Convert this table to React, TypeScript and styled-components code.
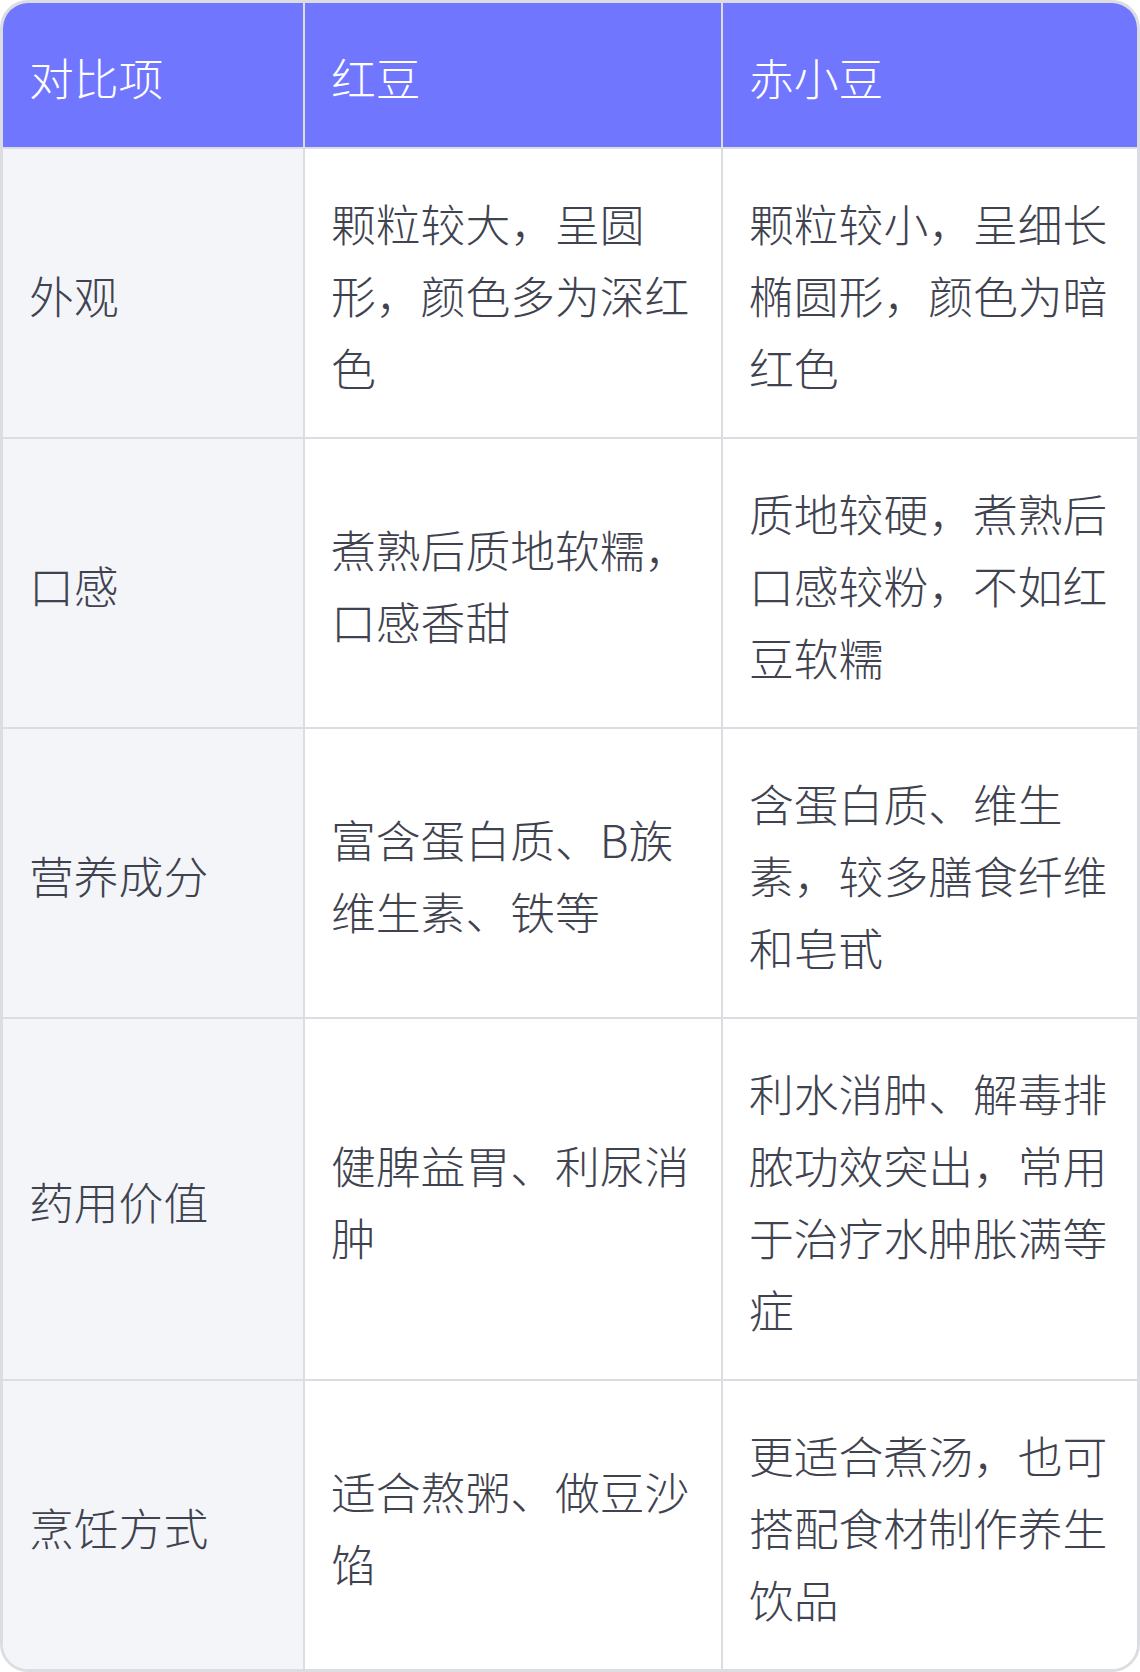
import React from 'react'
import styled, { createGlobalStyle } from 'styled-components'

const GlobalStyle = createGlobalStyle`
  html, body {
    margin: 0;
    padding: 0;
    background: #ffffff;
  }

  body {
    font-family: 'Noto Sans CJK SC', 'Noto Sans', sans-serif;
  }
`

const TableFrame = styled.div`
  width: 1140px;
  box-sizing: border-box;
  border: 3px solid #dcdde3;
  border-radius: 28px;
  overflow: hidden;
  background: #ffffff;
`

const Table = styled.table`
  width: 100%;
  border-collapse: collapse;
  table-layout: fixed;
`

const HeadCell = styled.th`
  box-sizing: border-box;
  padding: 38px 22px 33.5px 26px;
  background: #7176ff;
  color: #ffffff;
  font-size: 44.8px;
  font-weight: 300;
  line-height: 72px;
  text-align: left;
  vertical-align: middle;
  border-right: 2px solid #dcdde3;
  border-bottom: 2px solid #dcdde3;

  &:last-child {
    border-right: none;
  }
`

const Cell = styled.td<{ $label?: boolean }>`
  box-sizing: border-box;
  padding: 38px 22px 34px 26px;
  background: ${(p) => (p.$label ? '#f4f5f9' : '#ffffff')};
  color: #3f4350;
  font-size: 44.8px;
  font-weight: 300;
  line-height: 72px;
  text-align: left;
  vertical-align: middle;
  border-right: 2px solid #dcdde3;
  border-bottom: 2px solid #dcdde3;

  &:last-child {
    border-right: none;
  }

  tr:last-child > & {
    border-bottom: none;
  }
`

type Row = {
  label: string
  red: string
  adzuki: string
}

const rows: Row[] = [
  {
    label: '外观',
    red: '颗粒较大，呈圆形，颜色多为深红色',
    adzuki: '颗粒较小，呈细长椭圆形，颜色为暗红色',
  },
  {
    label: '口感',
    red: '煮熟后质地软糯，口感香甜',
    adzuki: '质地较硬，煮熟后口感较粉，不如红豆软糯',
  },
  {
    label: '营养成分',
    red: '富含蛋白质、B族维生素、铁等',
    adzuki: '含蛋白质、维生素，较多膳食纤维和皂甙',
  },
  {
    label: '药用价值',
    red: '健脾益胃、利尿消肿',
    adzuki: '利水消肿、解毒排脓功效突出，常用于治疗水肿胀满等症',
  },
  {
    label: '烹饪方式',
    red: '适合熬粥、做豆沙馅',
    adzuki: '更适合煮汤，也可搭配食材制作养生饮品',
  },
]

export default function App(): JSX.Element {
  return (
    <>
      <GlobalStyle />
      <TableFrame>
        <Table>
          <colgroup>
            <col style={{ width: 301 }} />
            <col style={{ width: 418 }} />
            <col />
          </colgroup>
          <thead>
            <tr>
              <HeadCell>对比项</HeadCell>
              <HeadCell>红豆</HeadCell>
              <HeadCell>赤小豆</HeadCell>
            </tr>
          </thead>
          <tbody>
            {rows.map((row) => (
              <tr key={row.label}>
                <Cell $label>{row.label}</Cell>
                <Cell>{row.red}</Cell>
                <Cell>{row.adzuki}</Cell>
              </tr>
            ))}
          </tbody>
        </Table>
      </TableFrame>
    </>
  )
}
